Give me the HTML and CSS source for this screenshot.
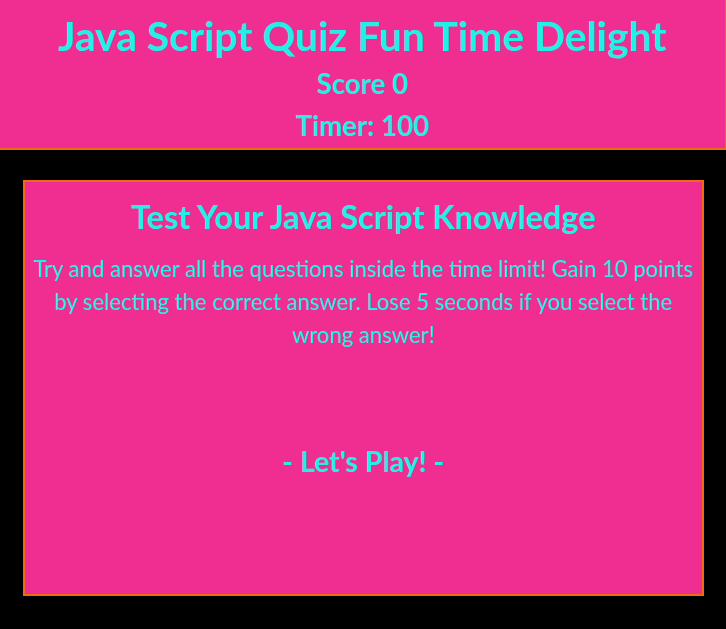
FILE: index.html
```html
<!DOCTYPE html>
<html lang="en">
<head>
<meta charset="utf-8">
<title>Java Script Quiz Fun Time Delight</title>
<link rel="stylesheet" href="styles.css">
</head>
<body>
<header class="top">
  <h1 class="title">Java Script Quiz Fun Time Delight</h1>
  <div class="stat">Score 0</div>
  <div class="stat">Timer: 100</div>
</header>
<main class="card">
  <h2 class="card-title">Test Your Java Script Knowledge</h2>
  <p class="intro">Try and answer all the questions inside the time limit! Gain 10 points by selecting the correct answer. Lose 5 seconds if you select the wrong answer!</p>
  <div class="play">- Let's Play! -</div>
</main>
</body>
</html>
```

FILE: styles.css
```css
html, body {
  margin: 0;
  padding: 0;
  background: #000;
}
body {
  font-family: "Segoe UI", Lato, "Open Sans", sans-serif;
  color: #22f0e6;
}
.top {
  background: #f02d90;
  border-bottom: 2px solid #f06a10;
  border-right: 1px solid #f06a10;
  text-align: center;
  padding: 8px 0 2px;
}
.title {
  margin: 0;
  font-size: 40.8px;
  line-height: 55px;
  font-weight: 700;
}
.stat {
  font-size: 27.6px;
  line-height: 41.5px;
  font-weight: 700;
}
.card {
  box-sizing: border-box;
  margin: 30px 22px 0 23px;
  height: 416px;
  background: #f02d90;
  border: 2px solid #f06a10;
  text-align: center;
  padding: 15px 6px 0;
}
.card-title {
  margin: 0;
  font-size: 32.5px;
  line-height: 40px;
  font-weight: 700;
}
.intro {
  margin: 15px 0 0;
  font-size: 22.1px;
  line-height: 33px;
}
.play {
  margin-top: 92px;
  font-size: 28.5px;
  line-height: 36px;
  font-weight: 700;
}
```
